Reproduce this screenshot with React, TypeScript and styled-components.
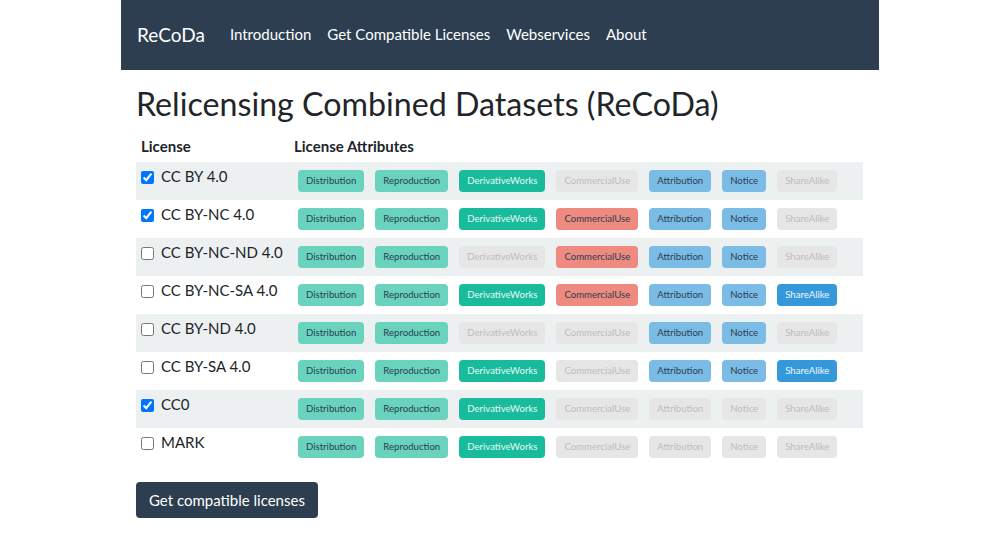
import React from "react";
import styled, { createGlobalStyle } from "styled-components";

const GlobalStyle = createGlobalStyle`
  html, body { margin: 0; padding: 0; background: #ffffff; }
  body {
    font-family: Lato, "Open Sans", "Liberation Sans", sans-serif;
    font-size: 15px;
    color: #212529;
  }
  * { box-sizing: border-box; }
`;

const Page = styled.div`
  width: 758px;
  margin: 0 auto;
`;

const NavBar = styled.nav`
  height: 70px;
  background: #2c3e50;
  display: flex;
  align-items: center;
  padding: 0 16px 1px 16px;
`;

const Brand = styled.a`
  color: #ffffff;
  font-size: 19px;
  line-height: 1;
  margin-right: 17px;
  text-decoration: none;
`;

const NavLink = styled.a`
  color: #ffffff;
  font-size: 15px;
  line-height: 1;
  padding: 0 8px;
  text-decoration: none;
  &:first-of-type {
    padding-right: 10px;
  }
`;

const Content = styled.main`
  padding: 16px 15px 0 15px;
`;

const Title = styled.h1`
  margin: 0 0 11px 0;
  font-size: 32.2px;
  font-weight: 400;
  line-height: 35px;
  color: #212529;
`;

const Table = styled.div`
  width: 727px;
  display: flex;
  flex-direction: column;
`;

const HeadRow = styled.div`
  display: grid;
  grid-template-columns: 153px 1fr;
  height: 30px;
`;

const HeadCell = styled.div`
  padding: 4px 5px 0 5px;
  font-weight: 700;
  font-size: 15px;
  line-height: 21px;
`;

const Row = styled.div<{ $striped: boolean }>`
  display: grid;
  grid-template-columns: 153px 1fr;
  height: 38px;
  background: ${(p) => (p.$striped ? "#ecf0f1" : "#ffffff")};
`;

const LicenseCell = styled.label`
  display: flex;
  align-items: flex-start;
  padding: 4px 5px 0 5px;
  font-size: 15px;
  line-height: 21px;
`;

const Check = styled.input`
  width: 13px;
  height: 13px;
  margin: 5px 7px 0 0;
`;

const AttrCell = styled.div`
  display: flex;
  align-items: flex-start;
  gap: 11px;
  padding: 8px 0 0 9px;
`;

type Kind = "teal" | "green" | "red" | "lightblue" | "blue" | "off";

const kindStyles: Record<Kind, { bg: string; fg: string }> = {
  teal: { bg: "#69d3be", fg: "#2c3e50" },
  green: { bg: "#18bc9c", fg: "#e8f8f5" },
  red: { bg: "#ef8a80", fg: "#2c3e50" },
  lightblue: { bg: "#7bbce7", fg: "#2c3e50" },
  blue: { bg: "#3498db", fg: "#f0f7fc" },
  off: { bg: "#e6e6e6", fg: "#bdbdbd" },
};

const Badge = styled.span<{ $kind: Kind }>`
  display: inline-block;
  height: 22px;
  line-height: 21px;
  padding: 0 8px;
  border-radius: 4px;
  font-size: 9.6px;
  white-space: nowrap;
  background: ${(p) => kindStyles[p.$kind].bg};
  color: ${(p) => kindStyles[p.$kind].fg};
`;

const SubmitButton = styled.button`
  margin-top: 16px;
  height: 36px;
  padding: 0 13px;
  border: none;
  border-radius: 4px;
  background: #2c3e50;
  color: #ffffff;
  font-family: Lato, "Open Sans", "Liberation Sans", sans-serif;
  font-size: 15px;
  line-height: 36px;
  cursor: pointer;
`;

const attrs = [
  "Distribution",
  "Reproduction",
  "DerivativeWorks",
  "CommercialUse",
  "Attribution",
  "Notice",
  "ShareAlike",
];

const activeKind: Kind[] = ["teal", "teal", "green", "red", "lightblue", "lightblue", "blue"];

type License = { name: string; checked: boolean; flags: number[] };

const licenses: License[] = [
  { name: "CC BY 4.0", checked: true, flags: [1, 1, 1, 0, 1, 1, 0] },
  { name: "CC BY-NC 4.0", checked: true, flags: [1, 1, 1, 1, 1, 1, 0] },
  { name: "CC BY-NC-ND 4.0", checked: false, flags: [1, 1, 0, 1, 1, 1, 0] },
  { name: "CC BY-NC-SA 4.0", checked: false, flags: [1, 1, 1, 1, 1, 1, 1] },
  { name: "CC BY-ND 4.0", checked: false, flags: [1, 1, 0, 0, 1, 1, 0] },
  { name: "CC BY-SA 4.0", checked: false, flags: [1, 1, 1, 0, 1, 1, 1] },
  { name: "CC0", checked: true, flags: [1, 1, 1, 0, 0, 0, 0] },
  { name: "MARK", checked: false, flags: [1, 1, 1, 0, 0, 0, 0] },
];

export default function App() {
  return (
    <>
      <GlobalStyle />
      <Page>
        <NavBar>
          <Brand href="#">ReCoDa</Brand>
          <NavLink href="#">Introduction</NavLink>
          <NavLink href="#">Get Compatible Licenses</NavLink>
          <NavLink href="#">Webservices</NavLink>
          <NavLink href="#">About</NavLink>
        </NavBar>
        <Content>
          <Title>Relicensing Combined Datasets (ReCoDa)</Title>
          <Table>
            <HeadRow>
              <HeadCell>License</HeadCell>
              <HeadCell>License Attributes</HeadCell>
            </HeadRow>
            {licenses.map((l, i) => (
              <Row key={l.name} $striped={i % 2 === 0}>
                <LicenseCell>
                  <Check type="checkbox" defaultChecked={l.checked} />
                  {l.name}
                </LicenseCell>
                <AttrCell>
                  {attrs.map((a, j) => (
                    <Badge key={a} $kind={l.flags[j] ? activeKind[j] : "off"}>
                      {a}
                    </Badge>
                  ))}
                </AttrCell>
              </Row>
            ))}
          </Table>
          <SubmitButton type="button">Get compatible licenses</SubmitButton>
        </Content>
      </Page>
    </>
  );
}
